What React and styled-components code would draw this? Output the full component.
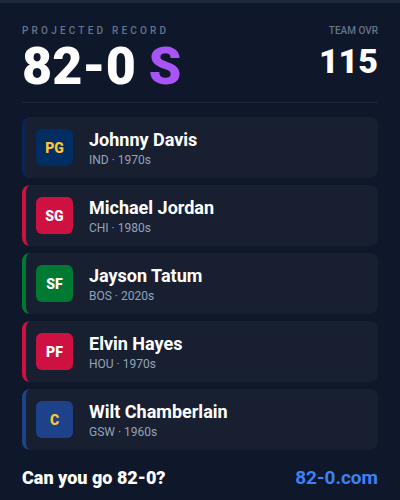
import React from 'react';
import styled, { createGlobalStyle } from 'styled-components';

const GlobalStyle = createGlobalStyle`
  html, body {
    margin: 0;
    padding: 0;
    background: #0f172a;
    font-family: Roboto, "Liberation Sans", sans-serif;
  }
  * { box-sizing: border-box; }
`;

const Page = styled.div`
  width: 400px;
  height: 500px;
  background: #0f172a;
  border-top: 3px solid #1e293b;
  display: flex;
  flex-direction: column;
  padding: 0 22px;
  overflow: hidden;
`;

const Header = styled.header`
  display: flex;
  justify-content: space-between;
  align-items: flex-start;
  padding-top: 22px;
  padding-bottom: 7px;
  border-bottom: 1px solid #1e293b;
`;

const Label = styled.div`
  font-size: 10px;
  font-weight: 500;
  color: #64748b;
  letter-spacing: ${p => (p.spaced ? '3.2px' : '0')};
  text-transform: uppercase;
  line-height: 12px;
`;

const Record = styled.div`
  font-size: 52px;
  font-weight: 900;
  color: #ffffff;
  line-height: 56px;
  margin-top: 2px;
`;

const Grade = styled.span`
  color: #a855f7;
`;

const Ovr = styled.div`
  display: flex;
  flex-direction: column;
  align-items: flex-end;
`;

const OvrValue = styled.div`
  font-size: 34px;
  font-weight: 900;
  color: #ffffff;
  line-height: 40px;
  margin-top: 4px;
`;

const List = styled.div`
  display: flex;
  flex-direction: column;
  gap: 7px;
  padding-top: 14px;
`;

const Card = styled.div`
  height: 61px;
  display: flex;
  align-items: center;
  gap: 16px;
  padding-left: 10px;
  background: #181f31;
  border-left: 4px solid ${p => p.accent};
  border-radius: 8px;
`;

const Badge = styled.div`
  width: 37px;
  height: 37px;
  border-radius: 6px;
  background: ${p => p.bg};
  color: ${p => p.fg};
  display: flex;
  align-items: center;
  justify-content: center;
  font-size: 14px;
  font-weight: 900;
`;

const Info = styled.div`
  display: flex;
  flex-direction: column;
`;

const Name = styled.div`
  font-size: 18px;
  font-weight: 700;
  color: #ffffff;
  line-height: 22px;
`;

const Meta = styled.div`
  font-size: 12px;
  color: #94a3b8;
  line-height: 14px;
  margin-top: 2px;
`;

const Footer = styled.footer`
  display: flex;
  justify-content: space-between;
  align-items: center;
  margin-top: 16px;
`;

const Tagline = styled.div`
  font-size: 18px;
  font-weight: 900;
  color: #ffffff;
`;

const Site = styled.div`
  font-size: 19px;
  font-weight: 700;
  color: #3b82f6;
`;

const roster = [
  { pos: 'PG', name: 'Johnny Davis', meta: 'IND · 1970s', accent: '#0b2552', bg: '#002d62', fg: '#fdc52f' },
  { pos: 'SG', name: 'Michael Jordan', meta: 'CHI · 1980s', accent: '#ce1141', bg: '#ce1141', fg: '#ffffff' },
  { pos: 'SF', name: 'Jayson Tatum', meta: 'BOS · 2020s', accent: '#007a33', bg: '#007a33', fg: '#ffffff' },
  { pos: 'PF', name: 'Elvin Hayes', meta: 'HOU · 1970s', accent: '#ce1141', bg: '#ce1141', fg: '#ffffff' },
  { pos: 'C', name: 'Wilt Chamberlain', meta: 'GSW · 1960s', accent: '#1d428a', bg: '#1d428a', fg: '#fdc52f' }
];

const App = () => (
  <>
    <GlobalStyle />
    <Page>
      <Header>
        <div>
          <Label spaced>Projected Record</Label>
          <Record>82-0 <Grade>S</Grade></Record>
        </div>
        <Ovr>
          <Label>Team OVR</Label>
          <OvrValue>115</OvrValue>
        </Ovr>
      </Header>
      <List>
        {roster.map(p => (
          <Card key={p.name} accent={p.accent}>
            <Badge bg={p.bg} fg={p.fg}>{p.pos}</Badge>
            <Info>
              <Name>{p.name}</Name>
              <Meta>{p.meta}</Meta>
            </Info>
          </Card>
        ))}
      </List>
      <Footer>
        <Tagline>Can you go 82-0?</Tagline>
        <Site>82-0.com</Site>
      </Footer>
    </Page>
  </>
);

export default App;
